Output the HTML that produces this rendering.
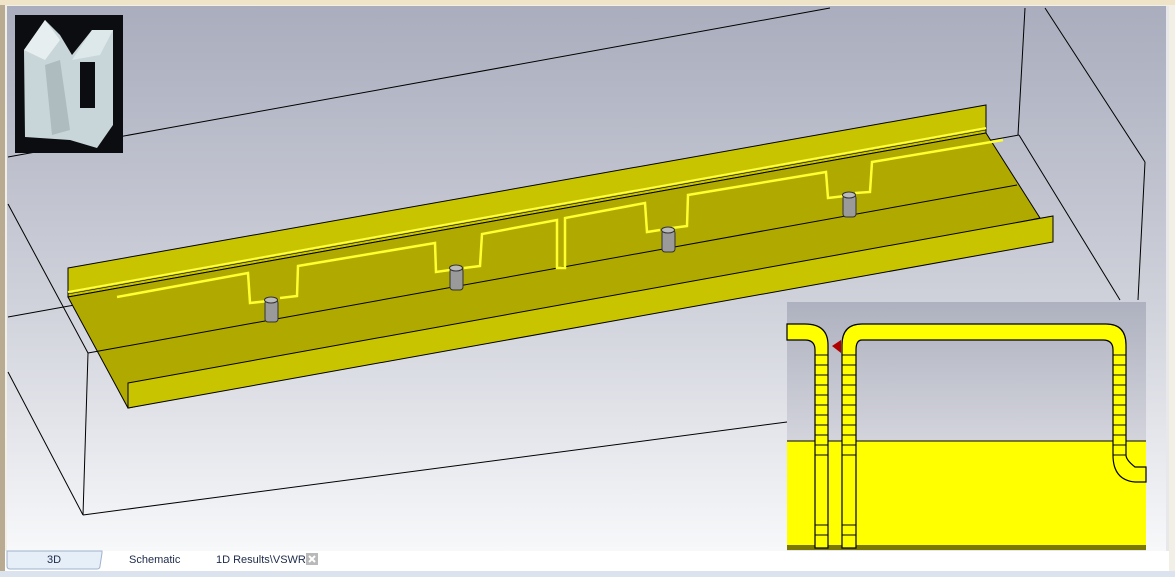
<!DOCTYPE html>
<html><head><meta charset="utf-8"><style>
body{margin:0;width:1175px;height:577px;overflow:hidden;background:#f2efe6;font-family:"Liberation Sans",sans-serif}
#v{position:absolute;left:7px;top:6px;width:1162px;height:544px}
</style></head><body>
<div style="position:absolute;left:0;top:0;width:5px;height:577px;background:#b9ab92"></div>
<div style="position:absolute;left:0;top:0;width:1175px;height:5px;background:#efe4c8"></div>
<svg width="1175" height="577" style="position:absolute;left:0;top:0">
<defs>
<linearGradient id="bg" x1="0" y1="0" x2="0" y2="1"><stop offset="0" stop-color="#a9adbd"/><stop offset="0.5" stop-color="#ccced8"/><stop offset="1" stop-color="#f7f8fa"/></linearGradient>
<linearGradient id="ig" x1="0" y1="0" x2="0" y2="1"><stop offset="0" stop-color="#aeb1bf"/><stop offset="1" stop-color="#d3d4dc"/></linearGradient>
</defs>
<rect x="7" y="6" width="1162" height="545" fill="url(#bg)"/>
<rect x="1166" y="6" width="3" height="545" fill="#e8e8ec"/>
<g stroke="#000" stroke-width="1" fill="none">
<line x1="8" y1="157" x2="830" y2="8"/>
<line x1="1025" y1="8" x2="1018" y2="135"/>
<line x1="1045" y1="8" x2="1145" y2="162"/>
<line x1="1145" y1="162" x2="1138" y2="300"/>
<line x1="8" y1="317" x2="1019" y2="135"/>
<line x1="1019" y1="135" x2="1120" y2="300"/>
<line x1="8" y1="204" x2="88" y2="353"/>
<line x1="88" y1="353" x2="83" y2="515"/>
<line x1="8" y1="372" x2="83" y2="515"/>
<line x1="83" y1="515" x2="787" y2="422"/>
</g>
<!-- tray -->
<polygon points="68,268 986,105 986,133 68,297" fill="#c9c400" stroke="#000"/>
<polygon points="68,297 986,133 1040,218 128,408" fill="#b0a900" stroke="#000"/>
<polygon points="128,383 1053,216 1053,242 128,408" fill="#c9c400" stroke="#000"/>
<line x1="88" y1="353" x2="1017" y2="185" stroke="#000"/>
<line x1="68" y1="292" x2="986" y2="128" stroke="#ffff40" stroke-width="2"/>
<line x1="68" y1="294" x2="986" y2="130" stroke="#000" stroke-width="0.6"/>
<g stroke="#ffff30" stroke-width="2.5" fill="none">
<polyline points="117,297 248,273 250,303 268,301"/>
<polyline points="280,298 297,296 298,266 435,243 436,272 450,270"/>
<polyline points="464,268 480,266 482,234 557,220 557,268 565,268 565,218 645,203 647,232 660,230"/>
<polyline points="672,228 687,226 688,195 826,172 828,198 845,196"/>
<polyline points="855,193 870,192 872,162 1003,140"/>
</g>
<g fill="#9a9a9a" stroke="#333">
<rect x="265" y="300" width="13" height="22" rx="3"/><ellipse cx="271" cy="300" rx="6.5" ry="3" fill="#bbb"/>
<rect x="450" y="268" width="13" height="22" rx="3"/><ellipse cx="456" cy="268" rx="6.5" ry="3" fill="#bbb"/>
<rect x="662" y="230" width="13" height="22" rx="3"/><ellipse cx="668" cy="230" rx="6.5" ry="3" fill="#bbb"/>
<rect x="843" y="195" width="13" height="22" rx="3"/><ellipse cx="849" cy="195" rx="6.5" ry="3" fill="#bbb"/>
</g>
<!-- thumbnail -->
<rect x="15" y="15" width="108" height="138" fill="#0c0d10"/>
<polygon points="24,50 45,20 60,35 72,55 92,30 113,30 113,125 97,148 70,140 25,137" fill="#c8d6da"/>
<polygon points="24,50 45,20 60,40 45,60" fill="#e6eef0"/>
<polygon points="72,60 92,30 113,30 100,55" fill="#dce8ea"/>
<rect x="80" y="62" width="15" height="46" fill="#0c0d10"/>
<polygon points="45,65 60,60 70,130 52,135" fill="#aebcc0"/>
<!-- inset -->
<rect x="787" y="302" width="359" height="266" fill="#e6e7ec"/>
<rect x="787" y="302" width="359" height="140" fill="url(#ig)"/>
<rect x="787" y="441" width="359" height="107" fill="#ffff00"/>
<line x1="787" y1="441" x2="1146" y2="441" stroke="#000"/>
<rect x="787" y="545" width="359" height="5" fill="#7a7800"/>
<line x1="787" y1="552" x2="1146" y2="552" stroke="#000" stroke-width="1.5"/>
<g stroke="#000" stroke-width="1.2" fill="#ffff00">
<path d="M787,324 H805 Q828,324 828,345 V548 H815 V350 Q815,340 805,340 H787 Z"/>
<path d="M842,548 V345 Q842,324 862,324 H1106 Q1126,324 1126,345 V455 Q1126,460 1135,467 H1146 V482 H1135 Q1113,480 1113,455 V350 Q1113,340 1103,340 H862 Q856,340 856,350 V548 Z"/>
</g>
<g stroke="#000" stroke-width="1">
<path d="M815,355H828M815,365H828M815,375H828M815,385H828M815,395H828M815,405H828M815,415H828M815,425H828M815,435H828M815,445H828M815,455H828M815,525H828M815,535H828"/>
<path d="M842,355H856M842,365H856M842,375H856M842,385H856M842,395H856M842,405H856M842,415H856M842,425H856M842,435H856M842,445H856M842,455H856M842,525H856M842,535H856"/>
<path d="M1113,355H1126M1113,365H1126M1113,375H1126M1113,385H1126M1113,395H1126M1113,405H1126M1113,415H1126M1113,425H1126M1113,435H1126M1113,445H1126M1113,455H1126"/>
</g>
<polygon points="832,346 841,340 841,353" fill="#b00000"/>
<!-- tab bar -->
<rect x="5" y="551" width="1164" height="20" fill="#fff"/>
<path d="M7,551 V566 Q7,569 10,569 H97 Q100,569 100,566 L102,553 V551 Z" fill="#e6eef8" stroke="#9fb3cc"/>
<rect x="0" y="571" width="1175" height="6" fill="#dbe3ee"/>
<rect x="306" y="553" width="12" height="12" fill="#b9b9b9"/>
<path d="M309,556 L315,562 M315,556 L309,562" stroke="#fff" stroke-width="2"/>
</svg>
<div style="position:absolute;top:554px;left:47px;font-size:11px;color:#1c2a4a">3D</div>
<div style="position:absolute;top:554px;left:129px;font-size:11px;color:#1c2a4a">Schematic</div>
<div style="position:absolute;top:554px;left:216px;font-size:11px;color:#1c2a4a">1D Results\VSWR</div>
</body></html>
